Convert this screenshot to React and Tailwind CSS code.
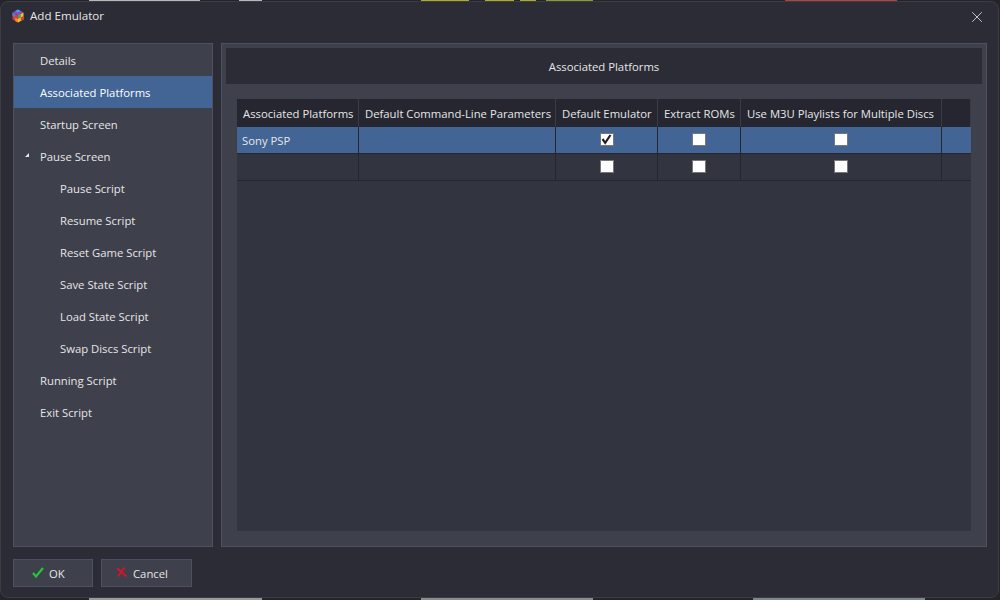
import { X } from 'lucide-react'

const navItems = [
  { label: 'Details', depth: 0 },
  { label: 'Associated Platforms', depth: 0, active: true },
  { label: 'Startup Screen', depth: 0 },
  { label: 'Pause Screen', depth: 0, expanded: true },
  { label: 'Pause Script', depth: 1 },
  { label: 'Resume Script', depth: 1 },
  { label: 'Reset Game Script', depth: 1 },
  { label: 'Save State Script', depth: 1 },
  { label: 'Load State Script', depth: 1 },
  { label: 'Swap Discs Script', depth: 1 },
  { label: 'Running Script', depth: 0 },
  { label: 'Exit Script', depth: 0 },
]

const colWidths = ['w-[122px]', 'w-[197px]', 'w-[102px]', 'w-[83px]', 'w-[201px]', 'flex-1']

function AppLogo() {
  return (
    <svg width="14" height="14" viewBox="0 0 14 14" className="mb-[2px] shrink-0">
      <polygon points="7,0.5 12.5,3.5 7,6.5 1.5,3.5" fill="#9b3fd1" />
      <polygon points="1.5,3.5 7,6.5 7,13.5 1.5,10.5" fill="#e0392f" />
      <polygon points="12.5,3.5 7,6.5 7,13.5 12.5,10.5" fill="#f2c230" />
      <polygon points="1.5,3.5 4.2,5 4.2,8.5 1.5,7" fill="#2f8fe0" />
      <polygon points="4.2,8.5 7,10 7,13.5 4.2,12" fill="#f08a24" />
      <polygon points="7,6.5 9.8,5 9.8,8.5 7,10" fill="#3dab4a" />
      <polygon points="9.8,8.5 12.5,7 12.5,10.5 9.8,12" fill="#e0392f" />
      <polygon points="4.2,2 7,0.5 9.8,2 7,3.5" fill="#2fb0c9" />
    </svg>
  )
}

function NavRow({ item }) {
  return (
    <div className={`relative flex h-8 items-center pt-[4px] ${item.depth ? 'pl-[46px]' : 'pl-[26px]'} ${item.active ? 'bg-[#426595] text-white' : ''}`}>
      {item.expanded && <span className="absolute left-[11px] top-[13px] h-0 w-0 border-b-[4px] border-l-[4px] border-b-[#e6e6e6] border-l-transparent" />}
      {item.label}
    </div>
  )
}

function Box({ checked }) {
  return (
    <span className="flex h-[13px] w-[14px] items-center justify-center border border-[#777] bg-white">
      {checked && (
        <svg width="11" height="11" viewBox="0 0 11 11">
          <polyline points="1.5,5 4.2,8.8 9.5,1" fill="none" stroke="#222" strokeWidth="2.2" />
        </svg>
      )}
    </span>
  )
}

function Row({ title, checked, active }) {
  return (
    <div className={`flex h-[27px] border-b border-[#25262f] ${active ? 'bg-[#426595]' : ''}`}>
      <div className={`${colWidths[0]} flex items-center border-r border-[#25262f] pl-[5px] pt-[4px]`}>{title}</div>
      <div className={`${colWidths[1]} border-r border-[#25262f]`} />
      {[checked, false, false].map((isOn, i) => (
        <div key={i} className={`${colWidths[i + 2]} flex items-center justify-center border-r border-[#25262f]`}>
          <Box checked={isOn} />
        </div>
      ))}
      <div className={colWidths[5]} />
    </div>
  )
}

function EdgeStrip({ height, segments }) {
  return (
    <div className={`flex ${height}`}>
      {segments.map((seg, i) => <div key={i} className={seg} />)}
    </div>
  )
}

export default function App() {
  return (
    <div className="h-[600px] w-[1000px] overflow-hidden bg-[#24242a] font-['Open_Sans','Noto_Sans',sans-serif] text-[11.3px] text-[#e6e6e6]">
      <EdgeStrip
        height="h-px"
        segments={[
          'w-[89px]', 'w-[111px] bg-[#b8b8b8]', 'w-[39px]', 'w-[23px] bg-[#b8b8b8]', 'w-[159px]',
          'w-[48px] bg-[#b3ad22]', 'w-[16px]', 'w-[29px] bg-[#b3ad22]', 'w-[6px]', 'w-[16px] bg-[#b3ad22]', 'w-[10px]', 'w-[47px] bg-[#8c9a2c]',
          'w-[192px]', 'w-[112px] bg-[#b5443f]',
        ]}
      />
      <div className="flex h-[597px] w-[999px] flex-col rounded-lg border border-[#3b3c44] bg-[#2b2c35]">
        <div className="flex h-[30px] items-center gap-[5px] pl-[10px] pr-[12px]">
          <AppLogo />
          <span className="mb-[2px] flex-1 text-[11.6px]">Add Emulator</span>
          <X size={18} strokeWidth={1.1} />
        </div>

        <div className="flex flex-1 gap-2 pl-3 pr-[11px] pt-[11px]">
          <nav className="h-[504px] w-[200px] border border-[#4e5062] bg-[#3e404c]">
            {navItems.map((item) => <NavRow key={item.label} item={item} />)}
          </nav>

          <section className="flex h-[504px] flex-1 flex-col border border-[#4e5062] bg-[#3e404c] px-1 pb-[15px] pt-1">
            <div className="flex h-9 items-center justify-center bg-[#2b2c35] pt-[4px]">Associated Platforms</div>
            <div className="mx-[11px] mt-[15px] flex flex-1 flex-col bg-[#32343f]">
              <div className="flex h-[28px] bg-[#25262f]">
                {['Associated Platforms', 'Default Command-Line Parameters', 'Default Emulator', 'Extract ROMs', 'Use M3U Playlists for Multiple Discs', ''].map((heading, i) => (
                  <div key={i} className={`${colWidths[i]} flex items-center whitespace-nowrap border-r border-[#3a3b46] pl-[6px] pt-[4px]`}>{heading}</div>
                ))}
              </div>
              <Row title="Sony PSP" checked active />
              <Row title="" />
            </div>
          </section>
        </div>

        <div className="flex h-[51px] gap-2 pl-3 pt-[12px]">
          <button className="flex h-[28px] w-[80px] items-center gap-[5px] border border-[#4e5062] bg-[#3e404c] pl-[18px] pt-[4px]">
            <svg width="12" height="11" viewBox="0 0 12 11" className="mb-[5px]">
              <polyline points="1,6 4,9.5 11,1" fill="none" stroke="#22c93a" strokeWidth="2.1" />
            </svg>
            OK
          </button>
          <button className="flex h-[28px] w-[91px] items-center gap-[6px] border border-[#4e5062] bg-[#3e404c] pl-[14px] pt-[4px]">
            <svg width="11" height="10" viewBox="0 0 11 10" className="mb-[5px]">
              <path d="M1 1 L10.5 9.5 M8.5 0.5 L2 9.5" fill="none" stroke="#e0102a" strokeWidth="1.7" />
            </svg>
            Cancel
          </button>
        </div>
      </div>
      <EdgeStrip
        height="h-[2px]"
        segments={[
          'w-[89px]', 'w-[173px] bg-[#9a9a9a]', 'w-[159px]', 'w-[172px] bg-[#8c8c90]', 'w-[160px]', 'w-[172px] bg-[#7c8a90]',
        ]}
      />
    </div>
  )
}
